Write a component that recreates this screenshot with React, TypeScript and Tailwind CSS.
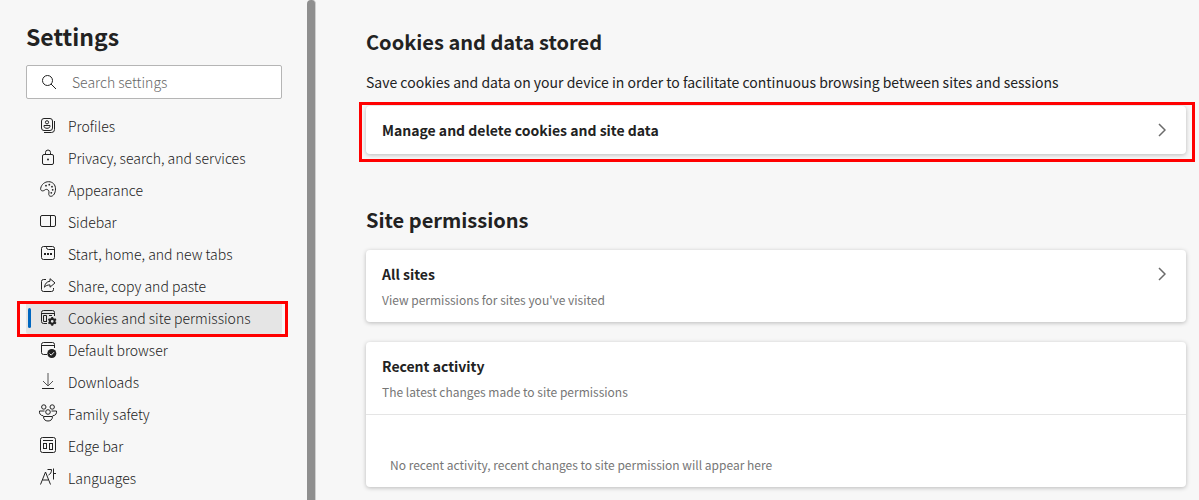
import type { ReactNode } from 'react';

const icons: Record<string, ReactNode> = {
  profiles: (
    <>
      <rect x="1.5" y="0.5" width="11" height="12" rx="2.5" />
      <circle cx="7" cy="4.3" r="1.6" />
      <path d="M4 7.5h6v.7c0 1.4-1.3 2.1-3 2.1s-3-.7-3-2.1z" />
      <path d="M14.5 3v8.5a3 3 0 0 1-3 3H4" />
    </>
  ),
  privacy: (
    <>
      <rect x="2.5" y="4.5" width="11" height="10" rx="1.5" />
      <path d="M5.5 4.5v-2a2.5 2.5 0 0 1 5 0v2" />
      <circle cx="8" cy="9.5" r="1" fill="currentColor" stroke="none" />
    </>
  ),
  appearance: (
    <>
      <path d="M.7 6.2C1.5 2.3 4.8-.3 8.6-.3c4.1 0 6.9 3 6.9 7.2 0 4-2 7.4-4.6 7.4-1.800 0-2.400-1.300-2-3.200.4-1.800-.2-3.100-1.700-3.600-1.300-.4-1.900.1-2.800.8C2.600 9.500.2 8.900.7 6.200z" />
      <g fill="currentColor" stroke="none">
        <circle cx="6" cy="3.7" r=".9" />
        <circle cx="9.3" cy="2.7" r=".9" />
        <circle cx="12" cy="4.7" r=".9" />
        <circle cx="12.7" cy="7.8" r=".9" />
        <circle cx="11.3" cy="10.8" r=".9" />
      </g>
    </>
  ),
  sidebar: (
    <>
      <rect x="0.5" y="1.5" width="15" height="11" rx="1.5" />
      <path d="M10.5 1.5v11" />
    </>
  ),
  start: (
    <>
      <rect x="1.5" y="0.5" width="13" height="13" rx="2" />
      <path d="M6.5.5v1a2 2 0 0 0 2 2h6" />
      <path d="M4 8h2M7 8h2M10 8h2" strokeWidth="2" />
    </>
  ),
  share: (
    <>
      <path d="M6 1.5H3.5a2 2 0 0 0-2 2v8a2 2 0 0 0 2 2h8a2 2 0 0 0 2-2V10" />
      <path d="M10 .7l5 4.200-5 4.300V6.900c-2.600 0-4.300.8-5.500 2.300.4-3.500 2.200-5.600 5.500-6z" />
    </>
  ),
  cookies: (
    <>
      <path d="M7 13.500H3.500a2 2 0 0 1-2-2v-9a2 2 0 0 1 2-2h9a2 2 0 0 1 2 2V6M1.500 3.500h13" />
      <path d="M7 11.500H3.500v-6h3v6M9 5.500h3" />
      <circle cx="12.2" cy="11.3" r="2.4" strokeWidth="2" />
      <path d="M12.200 6.900v2M12.200 13.700v2M8.400 9.100l1.700 1M14.300 12.500l1.700 1M8.400 13.500l1.700-1M14.300 10.100l1.700-1" strokeWidth="2" />
    </>
  ),
  browser: (
    <>
      <path d="M7 12.500H3.500a2 2 0 0 1-2-2v-8a2 2 0 0 1 2-2h9a2 2 0 0 1 2 2V6M1.500 3.500h13" />
      <circle cx="11.8" cy="11.5" r="4.5" fill="currentColor" stroke="none" />
      <path d="M9.600 11.600l1.600 1.600 2.800-3" stroke="#f7f7f7" />
    </>
  ),
  downloads: (
    <>
      <path d="M8-1v13M3 7l5 5 5-5" stroke="#555" />
      <path d="M2 14.5h12" />
    </>
  ),
  family: (
    <>
      <circle cx="3.8" cy="1" r="2.2" />
      <circle cx="12.2" cy="1" r="2.2" />
      <circle cx="8" cy="6" r="2.3" />
      <path d="M4.500 5H-.5c-.4 2.500.8 4.500 3.800 4.800M11.500 5h5c.4 2.500-.8 4.500-3.800 4.800" />
      <path d="M3.500 10.500h9c0 3-1.800 4.500-4.500 4.500s-4.500-1.500-4.500-4.500z" />
    </>
  ),
  edge: (
    <>
      <rect x="0.5" y="-0.5" width="15" height="15" rx="2" />
      <path d="M3 2.5h10" />
      <rect x="3.5" y="5.5" width="3" height="5" />
      <rect x="9.5" y="5.5" width="3" height="6" />
    </>
  ),
  languages: (
    <>
      <path d="M.5 14.500L5.500 2l5 12.500M2.500 10h6" />
      <path d="M7.500-.5h4c0 3-1 4.500-3 5.500M13.500-1.500v11M13.500 3.500H16" />
    </>
  ),
};

const navItems = [
  { icon: 'profiles', label: 'Profiles' },
  { icon: 'privacy', label: 'Privacy, search, and services' },
  { icon: 'appearance', label: 'Appearance' },
  { icon: 'sidebar', label: 'Sidebar' },
  { icon: 'start', label: 'Start, home, and new tabs' },
  { icon: 'share', label: 'Share, copy and paste' },
  { icon: 'cookies', label: 'Cookies and site permissions' },
  { icon: 'browser', label: 'Default browser' },
  { icon: 'downloads', label: 'Downloads' },
  { icon: 'family', label: 'Family safety' },
  { icon: 'edge', label: 'Edge bar' },
  { icon: 'languages', label: 'Languages' },
];

function NavIcon({ name }: { name: string }) {
  return (
    <svg viewBox="0 0 16 16" className="w-4 h-4 shrink-0 overflow-visible" fill="none" stroke="currentColor" aria-hidden="true">
      {icons[name]}
    </svg>
  );
}

function Chevron() {
  return (
    <svg viewBox="0 0 8 14" className="w-2 h-3.5 shrink-0 text-[#6b6b6b]" fill="none" stroke="currentColor" strokeWidth="1.5" aria-hidden="true">
      <path d="M1 1l6 6-6 6" />
    </svg>
  );
}

// Red frame drawn around a highlighted control
function Marker({ className }: { className: string }) {
  return <span className={`absolute border-3 border-[#ff0000] pointer-events-none ${className}`} />;
}

function Sidebar() {
  return (
    <aside className="w-[307px] shrink-0 pl-[26px] pr-[25px] pt-5">
      <h1 className="text-[23px] leading-8 font-bold">Settings</h1>
      <label className="mt-[13px] flex items-center h-[34px] px-3.5 gap-[15px] bg-white border border-[#b5b5b5] rounded-xs">
        <svg viewBox="0 0 16 16" className="w-4 h-4 shrink-0" fill="none" stroke="currentColor" aria-hidden="true">
          <circle cx="6.5" cy="6.5" r="5" />
          <path d="M10 10l5 5" />
        </svg>
        <input
          type="text"
          aria-label="Search settings"
          placeholder="Search settings"
          className="min-w-0 flex-1 text-sm font-light outline-none bg-transparent placeholder:text-[#666]"
        />
      </label>
      <nav className="mt-[11px]">
        {navItems.map(({ icon, label }) => {
          const active = icon === 'cookies';
          return (
            <a
              key={icon}
              href="#"
              aria-current={active ? 'page' : undefined}
              className={`relative flex items-center h-8 pl-3.5 gap-3 text-sm font-light whitespace-nowrap rounded-xs ${active ? 'bg-[#e5e5e5]' : ''}`}
            >
              {active && <span className="absolute left-0.5 inset-y-1.5 w-[3px] rounded-full bg-[#0067c0]" />}
              <NavIcon name={icon} />
              {label}
              {active && <Marker className="-left-[9px] -right-1.5 -top-px -bottom-[3px]" />}
            </a>
          );
        })}
      </nav>
    </aside>
  );
}

function Main() {
  return (
    <main className="flex-1 min-w-0 pl-[50px] pr-[13px] pt-[27px]">
      <h2 className="text-xl leading-[30px] font-bold">Cookies and data stored</h2>
      <p className="mt-[15px] text-sm leading-5">
        Save cookies and data on your device in order to facilitate continuous browsing between sites and sessions
      </p>
      <div className="relative mt-3.5">
        <button type="button" className="flex items-center justify-between w-full h-12 pl-4 pr-5 bg-white rounded-sm shadow-[0_1px_4px_rgba(0,0,0,0.25)] text-sm font-bold">
          Manage and delete cookies and site data
          <Chevron />
        </button>
        <Marker className="-left-[7px] -right-[9px] -top-1 -bottom-2" />
      </div>

      <h2 className="mt-[51px] text-xl leading-[30px] font-bold">Site permissions</h2>
      <button type="button" className="mt-[15px] flex items-start justify-between w-full h-[72px] pl-4 pr-5 pt-3.5 text-left bg-white rounded-sm shadow-[0_1px_4px_rgba(0,0,0,0.25)]">
        <span>
          <span className="block text-sm leading-5 font-bold">All sites</span>
          <span className="block mt-1.5 text-xs leading-5 text-[#767676]">View permissions for sites you've visited</span>
        </span>
        <span className="pt-[3px]">
          <Chevron />
        </span>
      </button>

      <section className="mt-5 bg-white rounded-sm shadow-[0_1px_4px_rgba(0,0,0,0.25)]">
        <div className="h-[73px] px-4 pt-3.5 border-b border-[#e5e5e5]">
          <h3 className="text-sm leading-5 font-bold">Recent activity</h3>
          <p className="mt-1.5 text-xs leading-5 text-[#767676]">The latest changes made to site permissions</p>
        </div>
        <p className="px-6 pt-10 pb-3 text-xs leading-5 text-[#767676]">
          No recent activity, recent changes to site permission will appear here
        </p>
      </section>
    </main>
  );
}

export default function App() {
  return (
    <div className="flex h-screen overflow-hidden bg-[#f7f7f7] text-[#222] font-['Noto_Sans_CJK_KR','Noto_Sans',sans-serif]">
      <Sidebar />
      <div className="w-[9px] shrink-0 rounded-t-sm bg-[#8f8f8f] border-r border-[#cfcfcf]" />
      <Main />
    </div>
  );
}
